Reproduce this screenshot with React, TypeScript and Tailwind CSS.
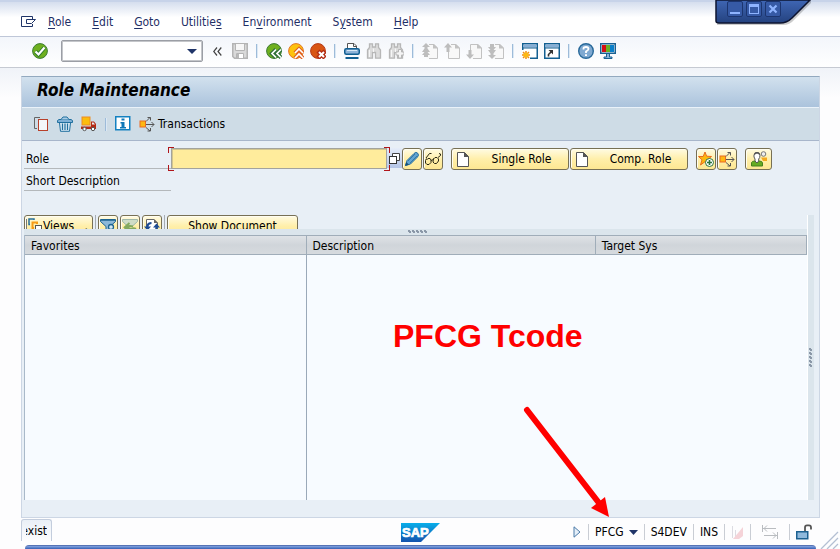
import type { ReactNode } from "react";

const paleButton =
  "flex h-[22px] shrink-0 items-center rounded-[3px] border border-[#777055] bg-linear-to-b from-[#fffbe2] via-[#ffefaa] to-[#fde792] shadow-[inset_1px_1px_0_#fffdf0]";

function Icon({ children, w = 16, h = 16 }: { children: ReactNode; w?: number; h?: number }) {
  return (
    <svg width={w} height={h} viewBox={`0 0 ${w} ${h}`} className="block shrink-0" fill="none" aria-hidden="true">
      {children}
    </svg>
  );
}

function IconButton({ label, children }: { label: string; children: ReactNode }) {
  return (
    <button type="button" aria-label={label} className="shrink-0">
      {children}
    </button>
  );
}

function Separator() {
  return <span className="mx-[2px] h-[14px] w-[2px] shrink-0 border-r border-[#dbe8f4] bg-[#9dbbd9]" />;
}

/* ---------- icons ---------- */

const MenuIcon = () => (
  <Icon w={16} h={12}>
    <path d="M11.500 3V.500H.500V10.500H11.500V8" stroke="#1f3468" />
    <path d="M5.500 3.500H14.500L10.500 7.500H5.500Z" stroke="#1f3468" />
  </Icon>
);

const CheckIcon = () => (
  <Icon>
    <circle cx="8" cy="8" r="7.400" fill="#6fb01f" stroke="#3c7d33" />
    <path d="M3.500 8.500L6.500 11.500L12.500 4.500" stroke="#2f7a2f" strokeWidth="4" />
    <path d="M3.500 8.500L6.500 11.500L12.500 4.500" stroke="#fff" strokeWidth="2.200" />
  </Icon>
);

const SaveIcon = () => (
  <Icon>
    <path d="M.750.750H15.250V15.250H2.500L.750 13.500Z" fill="#d9d9d9" stroke="#b4b4b4" strokeWidth="1.500" />
    <path d="M3.500 1V7.500H12.500V1" fill="#f7f7f7" stroke="#b4b4b4" />
    <path d="M4.500 15V10.500H11.500V15" fill="#fff" stroke="#b4b4b4" />
    <path d="M5 11H7V15H5Z" fill="#b9b9b9" />
  </Icon>
);

const BackIcon = () => (
  <Icon>
    <circle cx="8" cy="8" r="7.400" fill="#6fb01f" stroke="#3d7a34" />
    <path d="M10 6.500L6 10.500L10 14.500M15 6.500L11 10.500L15 14.500" stroke="#2f7039" strokeWidth="4" />
    <path d="M10 6.500L6 10.500L10 14.500M15 6.500L11 10.500L15 14.500" stroke="#fff" strokeWidth="1.700" />
  </Icon>
);

const ExitIcon = () => (
  <Icon>
    <circle cx="8" cy="8" r="7.400" fill="#fdc20d" stroke="#e2762a" />
    <path d="M7 10L11 6L15 10M7 15L11 11L15 15" stroke="#e16322" strokeWidth="4" />
    <path d="M7 10L11 6L15 10M7 15L11 11L15 15" stroke="#fff" strokeWidth="1.700" />
  </Icon>
);

const CancelIcon = () => (
  <Icon>
    <circle cx="8" cy="8" r="7.400" fill="#d85513" stroke="#b63a18" />
    <path d="M8 8L15 15M15 8L8 15" stroke="#b12b13" strokeWidth="4.500" />
    <path d="M9 9L14 14M14 9L9 14" stroke="#fff" strokeWidth="2" />
  </Icon>
);

const PrintIcon = () => (
  <Icon>
    <path d="M3.500 6V.500H10L12.500 3V6" fill="#fff" stroke="#555" />
    <path d="M9.500 1V3.500H12" stroke="#555" />
    <rect x=".750" y="5.750" width="14.500" height="5.500" rx="1.500" fill="#8fb4d8" stroke="#125f91" strokeWidth="1.500" />
    <path d="M3 7.500H13" stroke="#d9e8f4" />
    <rect x="1.500" y="14" width="13" height="2" fill="#125f91" />
  </Icon>
);

const FindIcon = ({ plus = false }: { plus?: boolean }) => (
  <Icon>
    <path
      d="M3.500.800H6.500V4H9.500V.800H12.500V4.500L14.500 7V15.200H9.500V9.500H6.500V15.200H1.500V7L3.500 4.500Z"
      fill="#dcdcdc"
      stroke="#b7b7b7"
      strokeWidth="1.300"
    />
    <path d="M3.500 7V14M7.500 5.500V9" stroke="#f6f6f6" />
    {plus && <path d="M10.500 6.500H13.500V9H16V12H13.500V15H10.500V12H8V9H10.500Z" fill="#f4f4f4" stroke="#b7b7b7" />}
  </Icon>
);

const PageIcon = ({ kind }: { kind: "first" | "prev" | "next" | "last" }) => (
  <Icon>
    <path d="M5.500 15.500H15.500V5L11.500 1.500H4.500V15" fill="#f8f8f8" />
    <path d="M7 1.500H11.500L15.500 5V15.500H7" stroke="#c2c2c2" />
    {(kind === "prev" || kind === "next") && <path d={kind === "prev" ? "M4.500 9V15.500H7" : "M7 1.500H4.500V8"} stroke="#c2c2c2" />}
    <path d="M11 1V5.500H16V5L12 1Z" fill="#c2c2c2" />
    {kind === "first" && <path d="M4 0L0 4H2.500V5.500L0 9H2.500L0 12H2V14H6V12H8L5.500 9H8L5.500 5.500V4H8Z" fill="#bdbdbd" />}
    {kind === "prev" && <path d="M4 0L0 4.500H2.500V9H5.500V4.500H8Z" fill="#bdbdbd" />}
    {kind === "next" && <path d="M4 16L0 11.500H2.500V7H5.500V11.500H8Z" fill="#bdbdbd" />}
    {kind === "last" && <path d="M4 16L0 12H2.500V10.500L0 7H2.500L0 4H2V1H6V4H8L5.500 7H8L5.500 10.500V12H8Z" fill="#bdbdbd" />}
  </Icon>
);

const SessionIcon = ({ shortcut = false }: { shortcut?: boolean }) => (
  <Icon>
    <rect x=".750" y=".750" width="14.500" height="14.500" fill="#fff" stroke="#125f91" strokeWidth="1.500" />
    <rect x="1.500" y="1.500" width="13" height="3" fill="#86aed5" />
    <path d="M1 5H15" stroke="#125f91" />
    {shortcut ? (
      <>
        <path d="M4.500 13.500V11.500L8 8" stroke="#333" strokeWidth="1.600" />
        <path d="M4.500 7H9V11.500Z" fill="#333" />
      </>
    ) : (
      <>
        <path d="M0 7H8V16H0Z" fill="#fff" />
        <path d="M4 8V16M0 12H8M1 9L7 15M7 9L1 15" stroke="#ef8d16" strokeWidth="1.500" />
        <circle cx="4" cy="12" r="2.500" fill="#fcb913" />
      </>
    )}
  </Icon>
);

const HelpIcon = () => (
  <Icon>
    <circle cx="8" cy="8" r="7.300" fill="#7fa9d1" stroke="#28699a" strokeWidth="1.400" />
    <path d="M5.500 6.500V5.500Q5.500 4 8 4Q10.500 4 10.500 6Q10.500 7 8 8.500V10" stroke="#fff" strokeWidth="1.800" />
    <path d="M7 11.300H9V13H7Z" fill="#fff" />
  </Icon>
);

const LayoutIcon = () => (
  <Icon>
    <rect x=".750" y=".750" width="14.500" height="9.500" fill="#fff" stroke="#1a6192" strokeWidth="1.500" />
    <path d="M2 2H6V9H2Z" fill="#d40f14" />
    <path d="M6 2H10V9H6Z" fill="#6ab023" />
    <path d="M10 2H14V9H10Z" fill="#0a7fc9" />
    <path d="M6.500 11V14H4V15.500H12V14H9.500V11" fill="#8ab3d8" stroke="#1a6192" />
  </Icon>
);

const CopyIcon = () => (
  <Icon>
    <path d="M7 1.500H1.500V12.500H4" stroke="#666" />
    <rect x="5.500" y="3.500" width="9" height="11" fill="#f4f7fa" stroke="#b8402a" />
  </Icon>
);

const TrashIcon = () => (
  <Icon>
    <path d="M.500 6.500V4.500L2 3.500H14L15.500 4.500V6.500Z" fill="#7fb0d6" stroke="#21709f" />
    <path d="M4 3.500L6 1H10L12 3.500" stroke="#21709f" fill="#a9cce5" />
    <path d="M2.500 7L3.500 15.300H12.500L13.500 7" fill="#d9e9f4" stroke="#21709f" />
    <path d="M5.500 7.500V14M8 7.500V14M10.500 7.500V14" stroke="#21709f" strokeWidth="1.200" />
  </Icon>
);

const TruckIcon = () => (
  <Icon>
    <rect x="1" y="1" width="8" height="8" fill="#fbbd0e" stroke="#ee8b22" />
    <path d="M0 10.500H10V5.500H13L15 8V13H0Z" fill="#b52a15" />
    <path d="M11 6.500H12.500L14 8.500H11Z" fill="#e8edf2" />
    <circle cx="3.500" cy="13" r="1.700" fill="#fff" stroke="#555" />
    <circle cx="12" cy="13" r="1.700" fill="#fff" stroke="#555" />
  </Icon>
);

const InfoIcon = () => (
  <Icon>
    <rect x=".750" y=".750" width="14" height="13" fill="#fff" stroke="#1481c1" strokeWidth="1.500" />
    <path d="M6.500 2.500H9.500V4.500H6.500ZM5.500 6H9.500V11H11V12.500H5V11H6.500V7.500H5.500Z" fill="#1078b8" />
  </Icon>
);

const BranchIcon = () => (
  <Icon>
    <rect x="1" y="5" width="5.500" height="6" fill="#fdb813" stroke="#ea6b25" />
    <path d="M7 8.500H15M12.500 6L15 8.500L12.500 11" stroke="#555" />
    <path d="M7 5.500L11 1.500M8.500 1.500H11.500V4.500M7 11.500L11 15M8.500 15H11.500V12" stroke="#555" />
  </Icon>
);

const DocumentIcon = () => (
  <Icon w={12} h={15}>
    <path d="M.500.500H7.500L11.500 4.500V14.500H.500Z" fill="#fff" stroke="#555" />
    <path d="M7 0V5H12Z" fill="#555" />
  </Icon>
);

const PencilIcon = () => (
  <Icon>
    <path d="M1.500 14.500L3 9.500L10 2.500Q12 .500 13.500 2Q15.500 4 13.500 6L6.500 13Z" fill="#62a4d2" stroke="#2a709e" />
    <path d="M4 10L11 3M6 12L13 5" stroke="#2a709e" strokeWidth=".800" />
    <path d="M1 15L2.300 11L5 13.700Z" fill="#17527b" />
  </Icon>
);

const GlassesIcon = () => (
  <Icon>
    <path
      d="M1 7L4.500 2.500H6.500M1.500 7.500L.500 9.500V12L2 13.500H4L6 11.500V9L5 7.500H3L1.500 9M6 9.500L8.500 8.500M8.500 7.500L8 11L9.500 12.500H11.500L13.500 10V8L12 6.500H10L8.500 8M13 6.500L15.500 4.500V3L14 2.500"
      stroke="#2b2815"
    />
  </Icon>
);

const StarIcon = () => (
  <Icon>
    <path d="M7 1L8.600 5.200L13.500 5.500L9.800 8.500L11 13.500L7 10.700L2.500 14L4 8.800L.500 5.500H5.200Z" fill="#fcb80e" stroke="#e76b20" />
    <circle cx="11.500" cy="11.500" r="4" fill="#fff" stroke="#2a753c" />
    <path d="M11.500 9V14M9 11.500H14" stroke="#2a753c" strokeWidth="1.600" />
  </Icon>
);

const UsersIcon = () => (
  <Icon>
    <circle cx="12.500" cy="3" r="2.300" fill="#eee" stroke="#777" />
    <path d="M10 6.500H16V10H12Z" fill="#f4a91f" />
    <path d="M.500 15V11.500Q1 10 4 10H8Q11.500 10 11.500 12V15Z" fill="#65ab22" stroke="#45811f" />
    <path d="M4 10V8Q2.500 6 3 4Q3.500 1.500 6 1.500Q8.500 1.500 9 4Q9 7 7.700 8V10L6 12Z" fill="#fff" stroke="#555" />
    <path d="M3 4Q3 1 6 1Q9 1 9 4L6 2.500Z" fill="#555" />
  </Icon>
);

const ViewsIcon = () => (
  <Icon>
    <path d="M.500 1V15" stroke="#777" />
    <path d="M8 2V1H3V6.500H4" stroke="#266f9b" strokeWidth="1.500" />
    <path d="M11 6V4.500H6.500V10H8" stroke="#f59b16" strokeWidth="2" />
    <rect x="9.500" y="7.500" width="6" height="6" fill="#fff" stroke="#555" />
  </Icon>
);

const FilterIcon = () => (
  <Icon>
    <path d="M.500 1.500H15.500V3.500L10 8.500V13L6 15V8.500L.500 3.500Z" fill="#8cb8d8" stroke="#1c6391" />
    <path d="M1 2H15" stroke="#1c6391" strokeWidth="1.500" />
    <circle cx="11" cy="9" r="2.500" fill="#d5e8f2" stroke="#1c6391" strokeWidth="1.300" />
  </Icon>
);

const UndoFilterIcon = () => (
  <Icon>
    <path d="M.500 1.500H15.500V3.500L10 8.500H6L.500 3.500Z" fill="#cfdcc6" stroke="#9fb8a9" />
    <path d="M2 14Q4 6 11 8.500M7.500 5L3 9L9 11" stroke="#83a95d" strokeWidth="2" />
    <path d="M8 13Q10 9 14 11" stroke="#83a95d" strokeWidth="2" />
  </Icon>
);

const RefreshIcon = () => (
  <Icon>
    <path d="M2.500 14V1.500H10L13.500 5V14" fill="#fff" stroke="#666" />
    <path d="M10 1V5H14Z" fill="#666" />
    <path d="M3.500 9V7.500Q4.500 5 7.500 5M12.500 9V11Q11 13 8 13" stroke="#1e4c94" strokeWidth="2.200" />
    <path d="M0 8.500H7L3.500 12.500ZM9 9.500H16L12.500 5.500Z" fill="#1e4c94" />
  </Icon>
);

const DotGrip = ({ vertical = false }: { vertical?: boolean }) => (
  <svg
    width={vertical ? 4 : 20}
    height={vertical ? 20 : 4}
    viewBox={vertical ? "0 0 4 20" : "0 0 20 4"}
    className="shrink-0"
    aria-hidden="true"
  >
    {[0, 4, 8, 12, 16].map((n) => (
      <path
        key={n}
        transform={vertical ? `translate(0 ${n})` : `translate(${n} 0)`}
        d="M0 0H2V1H3V3H1V2H0Z"
        fill="#8b98a8"
      />
    ))}
  </svg>
);

/* ---------- page parts ---------- */

function MenuBar() {
  const items: [string, string, string][] = [
    ["", "R", "ole"],
    ["", "E", "dit"],
    ["", "G", "oto"],
    ["Utilitie", "s", ""],
    ["En", "v", "ironment"],
    ["S", "y", "stem"],
    ["", "H", "elp"],
  ];
  return (
    <nav className="flex h-[37px] items-center border-t-2 border-b border-t-[#c7d3e9] border-b-[#bfc7d8] bg-linear-to-b from-[#d5deee] via-white via-45% to-white pt-[5px] pl-[21px] text-[#1f2f66]">
      <IconButton label="Menu">
        <MenuIcon />
      </IconButton>
      <div className="flex gap-[21px] pl-[11px]">
        {items.map(([before, key, after]) => (
          <button type="button" key={before + key + after}>
            {before}
            <span className="underline underline-offset-2">{key}</span>
            {after}
          </button>
        ))}
      </div>
    </nav>
  );
}

function StandardToolbar() {
  return (
    <div className="flex h-[31px] items-center gap-[6px] border-b border-[#c6cad2] bg-linear-to-b from-[#f3f6fb] to-white pb-[2px] pl-8">
      <IconButton label="Enter">
        <CheckIcon />
      </IconButton>
      <div className="mr-1 ml-[7px] flex h-[22px] w-[142px] items-center rounded-[2px] border border-[#9b9ea5] bg-white shadow-[inset_0_0_0_1px_#c4c6ca]">
        <input aria-label="Command" className="min-w-0 flex-1 bg-transparent px-1 outline-none" />
        <button type="button" aria-label="Command history" className="pr-[5px]">
          <Icon w={10} h={5}>
            <path d="M0 0H10L5 5Z" fill="#1f3468" />
          </Icon>
        </button>
      </div>
      <button type="button" aria-label="Collapse" className="mr-1 w-[9px]">
        <Icon w={9} h={9}>
          <path d="M4 .500L.700 4.500L4 8.500M8.300.500L5 4.500L8.300 8.500" stroke="#444" strokeWidth="1.200" />
        </Icon>
      </button>
      <IconButton label="Save"><SaveIcon /></IconButton>
      <Separator />
      <IconButton label="Back"><BackIcon /></IconButton>
      <IconButton label="Exit"><ExitIcon /></IconButton>
      <IconButton label="Cancel"><CancelIcon /></IconButton>
      <Separator />
      <IconButton label="Print"><PrintIcon /></IconButton>
      <IconButton label="Find"><FindIcon /></IconButton>
      <IconButton label="Find next"><FindIcon plus /></IconButton>
      <Separator />
      <IconButton label="First page"><PageIcon kind="first" /></IconButton>
      <IconButton label="Previous page"><PageIcon kind="prev" /></IconButton>
      <IconButton label="Next page"><PageIcon kind="next" /></IconButton>
      <IconButton label="Last page"><PageIcon kind="last" /></IconButton>
      <Separator />
      <IconButton label="New session"><SessionIcon /></IconButton>
      <IconButton label="Create shortcut"><SessionIcon shortcut /></IconButton>
      <Separator />
      <IconButton label="Help"><HelpIcon /></IconButton>
      <IconButton label="Customize layout"><LayoutIcon /></IconButton>
    </div>
  );
}

function WindowControls() {
  return (
    <div className="absolute top-0 right-[28px] h-[28px] w-[98px]">
      <svg width="98" height="28" viewBox="0 0 98 28" className="absolute inset-0" aria-hidden="true">
        <defs>
          <linearGradient id="tab" x1="0" y1="0" x2="0" y2="1">
            <stop offset="0" stopColor="#3f66b4" />
            <stop offset="1" stopColor="#24427f" />
          </linearGradient>
        </defs>
        <path d="M3 0V25H69Q76 25 80 20L97 3V0Z" fill="#000" opacity=".2" />
        <path d="M2 0V21Q2 23 5 23H66Q73 23 78 18L96 0Z" fill="url(#tab)" stroke="#0d1430" strokeWidth="1.500" />
      </svg>
      <div className="relative flex gap-[3px] pt-px pl-[13px]">
        {["Minimize", "Maximize", "Close"].map((name) => (
          <button
            type="button"
            key={name}
            aria-label={name}
            className="flex h-4 w-4 items-center justify-center rounded-[2px] border border-[#1c356f] bg-[#365aa6]"
          >
            <Icon w={10} h={10}>
              {name === "Minimize" && <path d="M0 9H10" stroke="#8fb4ff" strokeWidth="2" />}
              {name === "Maximize" && (
                <>
                  <rect x=".500" y=".500" width="9" height="9" stroke="#8fb4ff" />
                  <path d="M0 1.500H10" stroke="#8fb4ff" strokeWidth="3" />
                </>
              )}
              {name === "Close" && <path d="M1.500 1.500L8.500 8.500M8.500 1.500L1.500 8.500" stroke="#8fb4ff" strokeWidth="2.200" />}
            </Icon>
          </button>
        ))}
      </div>
    </div>
  );
}

function RoleForm() {
  return (
    <div>
      <div className="flex h-[22px] items-start gap-2">
        <div className="flex items-start gap-px">
          <label htmlFor="role" className="-mr-px h-[21px] w-[147px] border-b border-[#b4b8bb] pl-[2px] leading-[22px]">
            Role
          </label>
          <div className="relative -mr-px h-[21px] w-[216px]">
            <input
              id="role"
              className="h-full w-full border border-[#a3a39d] bg-[#ffec9c] px-1 shadow-[inset_1px_1px_0_#d3c68f] outline-none"
            />
            <span className="absolute -top-px -left-[3px] h-[6px] w-[6px] border-t border-l border-[#b0151a]" />
            <span className="absolute -bottom-[2px] -left-[3px] h-[6px] w-[6px] border-b border-l border-[#b0151a]" />
            <span className="absolute -top-px -right-[3px] z-10 h-[6px] w-[6px] border-t border-r border-[#b0151a]" />
            <span className="absolute -right-[3px] -bottom-[2px] z-10 h-[6px] w-[6px] border-r border-b border-[#b0151a]" />
          </div>
          <button
            type="button"
            aria-label="Search help"
            className="-mr-px flex h-[20px] w-[15px] items-center justify-center bg-linear-to-b from-[#e6edf9] to-[#b5c5e6]"
          >
            <Icon w={11} h={11}>
              <path d="M3.500 3V.500H10.500V7.500H8" fill="#fff" stroke="#444" />
              <rect x=".500" y="3.500" width="7" height="7" fill="#fff" stroke="#333" />
            </Icon>
          </button>
          <button type="button" aria-label="Change" className={`${paleButton} w-[20px] justify-center`}>
            <PencilIcon />
          </button>
          <button type="button" aria-label="Display" className={`${paleButton} w-[20px] justify-center`}>
            <GlassesIcon />
          </button>
        </div>
        <div className="flex gap-px">
          {["Single Role", "Comp. Role"].map((name) => (
            <button type="button" key={name} className={`${paleButton} w-[118px] gap-[6px] pl-[5px]`}>
              <DocumentIcon />
              <span className="flex-1">{name}</span>
            </button>
          ))}
        </div>
        <div className="flex gap-px">
          <button type="button" aria-label="Add to favorites" className={`${paleButton} w-[20px] justify-center`}>
            <StarIcon />
          </button>
          <button type="button" aria-label="Where used" className={`${paleButton} w-[20px] justify-center`}>
            <BranchIcon />
          </button>
        </div>
        <button type="button" aria-label="Users" className={`${paleButton} w-[27px] justify-center`}>
          <UsersIcon />
        </button>
      </div>
      <div className="h-[21px] w-[147px] border-b border-[#b4b8bb] pl-[2px] leading-[22px]">Short Description</div>
    </div>
  );
}

function ListToolbar() {
  return (
    <div className="flex h-[14px] items-start gap-[2px] overflow-hidden">
      <button type="button" className={`${paleButton} w-[69px] gap-px pl-px`}>
        <ViewsIcon />
        <span>Views</span>
        <span className="ml-auto pr-1">.</span>
      </button>
      <span className="h-[14px] w-px bg-[#a7adb3]" />
      <button type="button" aria-label="Filter" className={`${paleButton} w-[20px] justify-center`}>
        <FilterIcon />
      </button>
      <button type="button" aria-label="Delete filter" className={`${paleButton} w-[20px] justify-center`}>
        <UndoFilterIcon />
      </button>
      <button type="button" aria-label="Refresh" className={`${paleButton} w-[20px] justify-center`}>
        <RefreshIcon />
      </button>
      <span className="h-[14px] w-px bg-[#a7adb3]" />
      <button type="button" className={`${paleButton} w-[131px] justify-center`}>
        Show Document
      </button>
    </div>
  );
}

function RoleTable() {
  const head =
    "h-[20px] border border-l-0 border-[#a0adb9] bg-linear-to-b from-[#dfe2e6] via-[#d0d5da] to-[#d6dade] pt-px pl-[6px] text-left font-normal";
  return (
    <table className="w-full flex-1 table-fixed border-separate border-spacing-0 border-l border-[#a9b9c9] bg-[#f7fbff]">
      <colgroup>
        <col className="w-[36%]" />
        <col className="w-[37%]" />
        <col className="w-[27%]" />
      </colgroup>
      <thead>
        <tr>
          <th scope="col" className={head}>Favorites</th>
          <th scope="col" className={head}>Description</th>
          <th scope="col" className={head}>Target Sys</th>
        </tr>
      </thead>
      <tbody>
        <tr>
          <td className="h-full border-r border-[#9aa9b9]" />
          <td />
          <td />
        </tr>
      </tbody>
    </table>
  );
}

function StatusDivider() {
  return <span className="h-4 w-px bg-[#c9cdd4]" />;
}

function StatusBar() {
  return (
    <footer className="grid h-[27px] grid-cols-[1fr_auto_1fr] items-center bg-[#fdfdfe] px-[21px] pt-px">
      <div className="w-[31px] self-start rounded-t-[3px] border border-b-0 border-[#c3cddd] bg-linear-to-b from-[#e9eff6] to-[#fdfdfe] pt-px">
        <div className="flex h-[20px] w-[29px] items-center justify-end overflow-hidden pr-1">
          <span className="flex w-[21px] justify-end overflow-hidden">exist</span>
        </div>
      </div>
      <svg width="39" height="19" viewBox="0 0 39 19" role="img" aria-label="SAP">
        <defs>
          <linearGradient id="sap" x1="0" y1="0" x2="0" y2="1">
            <stop offset="0" stopColor="#08aeea" />
            <stop offset="1" stopColor="#1453ae" />
          </linearGradient>
        </defs>
        <path d="M0 0H39L20 19H0Z" fill="url(#sap)" />
        <text
          x="1"
          y="14"
          fill="#fff"
          stroke="#fff"
          strokeWidth=".700"
          className="font-['Liberation_Sans'] text-[13px] font-bold"
        >
          SAP
        </text>
      </svg>
      <div className="flex items-center justify-end gap-[6px] pr-[7px]">
        <button type="button" aria-label="Expand status" className="pr-px">
          <Icon w={8} h={12}>
            <path d="M1 .800L7 6L1 11.200Z" fill="#e4eef8" stroke="#4b7ba8" />
          </Icon>
        </button>
        <StatusDivider />
        <button type="button" className="flex items-center gap-[5px]">
          PFCG
          <Icon w={9} h={5}>
            <path d="M0 0H9L4.500 5Z" fill="#1f3468" />
          </Icon>
        </button>
        <StatusDivider />
        <span>S4DEV</span>
        <StatusDivider />
        <span>INS</span>
        <StatusDivider />
        <Icon w={13} h={13}>
          <path d="M1.500 0V12M4.500 4V12" stroke="#dcdce2" />
          <path d="M2 13L12 1V10L8 13Z" fill="#f5d3d8" />
        </Icon>
        <StatusDivider />
        <span className="px-[5px]">
          <Icon w={16} h={14}>
            <path d="M.500 0V7M1 3.500H14M5 .500L2 3.500L5 6.500" stroke="#b9bcc0" />
            <path d="M15.500 7V14M2 10.500H15M11 7.500L14 10.500L11 13.500" stroke="#b9bcc0" />
          </Icon>
        </span>
        <StatusDivider />
        <Icon>
          <path d="M9 7V3.500Q9 1.300 11 1.300H13Q15 1.300 15 3.500V5.500" stroke="#555" strokeWidth="1.800" />
          <rect x=".750" y="7.750" width="11" height="7" fill="#8fb9dc" stroke="#1c6190" strokeWidth="1.500" />
        </Icon>
      </div>
    </footer>
  );
}

export default function App() {
  return (
    <div className="relative flex h-screen flex-col overflow-hidden bg-[#fdfdfe] font-['DejaVu_Sans_Condensed','DejaVu_Sans',sans-serif] text-[12px] leading-4 text-black">
      <WindowControls />
      <MenuBar />
      <StandardToolbar />
      <main className="flex min-h-0 flex-1 flex-col bg-linear-to-b from-[#f0f3f8] to-[#fdfdfe] to-[30px] pt-2 pr-5 pl-[21px]">
        <div className="flex flex-1 flex-col border border-[#ccd6e4] border-t-[#93a9bf] bg-[#e8eff6]">
          <h1 className="h-[31px] border-b border-[#eaf2f9] bg-linear-to-b from-[#d2e1ee] to-[#abc3dc] pl-[15px] text-[17px] leading-[27px] font-bold italic">
            Role Maintenance
          </h1>
          <div className="flex h-[33px] items-center gap-2 border-b border-[#a8b6cb] bg-[#cedce6] pl-[11px]">
            <IconButton label="Copy role"><CopyIcon /></IconButton>
            <IconButton label="Delete role"><TrashIcon /></IconButton>
            <IconButton label="Transport role"><TruckIcon /></IconButton>
            <span className="h-[13px] w-[2px] border-r border-[#dbe8f4] bg-[#9dbbd9]" />
            <IconButton label="Information"><InfoIcon /></IconButton>
            <button type="button" className="flex items-center gap-[3px]">
              <BranchIcon />
              Transactions
            </button>
          </div>
          <div className="flex flex-1 flex-col pt-[7px] pr-[5px] pb-[17px] pl-[2px]">
            <RoleForm />
            <div className="mt-6 flex flex-1">
              <div className="flex min-w-0 flex-1 flex-col">
                <ListToolbar />
                <div className="flex h-[6px] items-center justify-center bg-[#dbe5ec] pl-[5px]">
                  <DotGrip />
                </div>
                <RoleTable />
              </div>
              <div className="flex w-[7px] items-center justify-center border-l border-white bg-[#dbe5ec]">
                <DotGrip vertical />
              </div>
            </div>
          </div>
        </div>
      </main>
      <StatusBar />
      <div className="mr-6 ml-[25px] h-1 shrink-0 rounded-t-[8px] border-t border-[#5673b5] bg-linear-to-b from-[#86a6e2] to-[#365fb4]" />
      <svg width="20" height="18" viewBox="0 0 20 18" className="absolute right-0 bottom-0" fill="none" aria-hidden="true">
        <path d="M1 18L18 1M7 18L18 7M13 18L18 13" stroke="#b3bfd3" strokeWidth="1.300" />
      </svg>
      <p className="absolute top-[317px] left-[393px] font-['Liberation_Sans',Arial,sans-serif] text-[32px] leading-[38px] font-bold whitespace-nowrap text-[#ff0000]">
        PFCG Tcode
      </p>
      <svg
        width="88"
        height="114"
        viewBox="0 0 88 114"
        className="pointer-events-none absolute top-[405px] left-[523px]"
        fill="none"
        aria-hidden="true"
      >
        <path d="M4 5L76 98" stroke="#f00" strokeWidth="6" strokeLinecap="round" />
        <path d="M86 112L68 103L82 92Z" fill="#f00" />
      </svg>
    </div>
  );
}
